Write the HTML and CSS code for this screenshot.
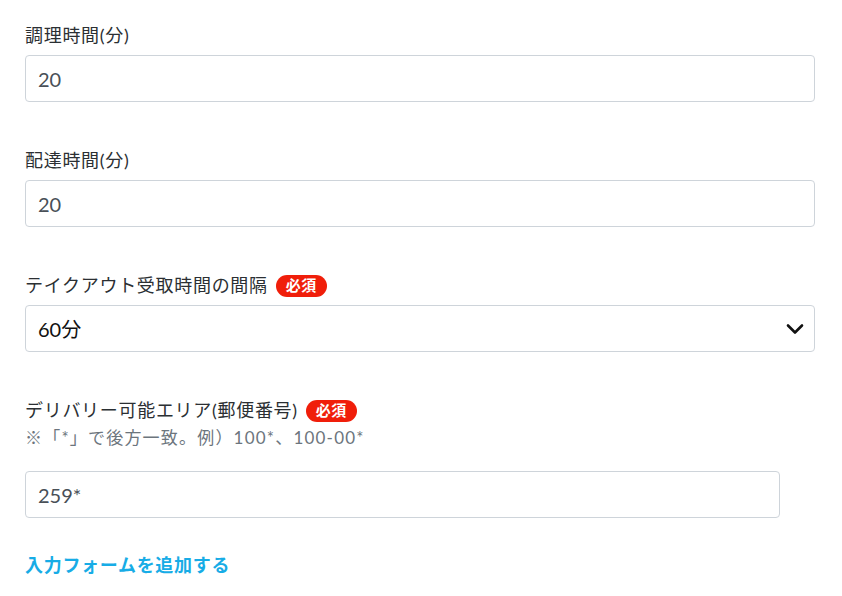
FILE: index.html
```html
<!DOCTYPE html>
<html lang="ja">
<head>
<meta charset="utf-8">
<link rel="stylesheet" href="styles.css">
</head>
<body>
<main class="form">
  <div class="group">
    <label class="label">調理時間(分)</label>
    <div class="input">20</div>
  </div>
  <div class="group">
    <label class="label">配達時間(分)</label>
    <div class="input">20</div>
  </div>
  <div class="group">
    <label class="label">テイクアウト受取時間の間隔<span class="badge">必須</span></label>
    <div class="input select"><span class="select-value">60分</span>
      <svg class="chevron" width="18" height="12" viewBox="0 0 18 12"><path d="M2 2.5 L9 9.5 L16 2.5" fill="none" stroke="#111" stroke-width="2.6" stroke-linecap="round" stroke-linejoin="round"/></svg>
    </div>
  </div>
  <div class="group">
    <label class="label">デリバリー可能エリア(郵便番号)<span class="badge">必須</span></label>
    <p class="note">※「*」で後方一致。例）100*、100-00*</p>
    <div class="input narrow">259*</div>
  </div>
  <a class="add-link" href="#">入力フォームを追加する</a>
</main>
</body>
</html>
```
FILE: styles.css
```css
body {
  margin: 0;
  background: #fff;
  font-family: "Lato", "Noto Sans CJK JP", sans-serif;
  color: #212529;
}
.form {
  padding: 23px 0 0 25px;
  width: 790px;
}
.group {
  margin-bottom: 46px;
}
.label {
  display: flex;
  align-items: center;
  font-size: 18px;
  letter-spacing: 0.7px;
  line-height: 25px;
  height: 25px;
  margin-bottom: 7px;
  color: #2b2f33;
}
.badge {
  display: inline-flex;
  align-items: center;
  justify-content: center;
  margin-left: 8px;
  width: 51px;
  height: 22px;
  border-radius: 11px;
  background: #f01e0a;
  color: #fff;
  font-size: 15px;
  font-weight: 700;
  letter-spacing: 0.5px;
}
.note {
  margin: -5px 0 0;
  font-size: 17px;
  letter-spacing: 1.2px;
  line-height: 25px;
  color: #6c757d;
}
.note + .input {
  margin-top: 21px;
}
.input {
  box-sizing: border-box;
  height: 47px;
  border: 1px solid #ced4da;
  border-radius: 4px;
  padding: 0 12px;
  display: flex;
  align-items: center;
  font-size: 20px;
  color: #495057;
}
.narrow {
  width: 755px;
}
.select {
  justify-content: space-between;
  color: #111;
}
.chevron {
  margin-right: -2px;
}
.add-link {
  display: block;
  margin-top: -11px;
  font-size: 18px;
  letter-spacing: 0.7px;
  line-height: 25px;
  font-weight: 700;
  color: #17ace6;
  text-decoration: none;
}
```
